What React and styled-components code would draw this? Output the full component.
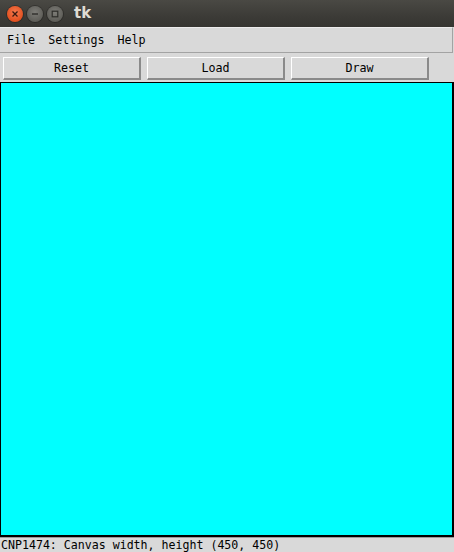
import React from "react";
import styled, { createGlobalStyle } from "styled-components";

const GlobalStyle = createGlobalStyle`
  html, body {
    margin: 0;
    padding: 0;
    background: #d9d9d9;
  }
`;

const Window = styled.div`
  width: 454px;
  height: 552px;
  display: flex;
  flex-direction: column;
  background: #d9d9d9;
  overflow: hidden;
  font-family: "DejaVu Sans Mono", "Liberation Mono", monospace;
  color: #000;
`;

const TitleBar = styled.div`
  height: 27px;
  flex: none;
  display: flex;
  align-items: center;
  padding-left: 7px;
  gap: 4px;
  background: linear-gradient(#4a4944, #3c3b37 60%, #363531);
`;

const WinButton = styled.div`
  width: 16px;
  height: 16px;
  border-radius: 50%;
  flex: none;
  display: flex;
  align-items: center;
  justify-content: center;
  background: ${(p) =>
    p.$close
      ? "radial-gradient(circle at 50% 40%, #f47a4f, #e3501f 70%, #c4441a)"
      : "radial-gradient(circle at 50% 40%, #7d7c77, #5d5c57 75%, #4c4b47)"};
  box-shadow: 0 0 0 1px rgba(0, 0, 0, 0.25);
`;

const Title = styled.div`
  margin-left: 7px;
  font-family: "DejaVu Sans", "Noto Sans", sans-serif;
  font-weight: bold;
  font-size: 15px;
  color: #dfdbd2;
  margin-top: -2px;
`;

const MenuBar = styled.div`
  flex: none;
  display: flex;
  align-items: center;
  padding-left: 1px;
  border-top: 1px solid #ececec;
  border-bottom: 1px solid #a3a3a3;
  border-right: 1px solid #a3a3a3;
  width: 453px;
  box-sizing: border-box;
  height: 26px;
`;

const MenuItem = styled.span`
  font-size: 11.7px;
  padding: 0 7px 0 6px;
  line-height: 25px;
`;

const ButtonRow = styled.div`
  height: 29px;
  flex: none;
  display: flex;
  gap: 6px;
  padding: 4px 0 0 3px;
  box-sizing: border-box;
`;

const Button = styled.div`
  width: 138px;
  height: 23px;
  box-sizing: border-box;
  border-style: solid;
  border-width: 1px 2px 2px 1px;
  border-color: #ffffff #8a8a8a #8a8a8a #ffffff;
  display: flex;
  align-items: center;
  justify-content: center;
  font-size: 11.7px;
`;

const Canvas = styled.div`
  height: 455px;
  width: 454px;
  flex: none;
  box-sizing: border-box;
  background: #00ffff;
  border-style: solid;
  border-color: #000;
  border-width: 1px 2px 2px 1px;
`;

const StatusBar = styled.div`
  flex: 1;
  border-top: 1px solid #9a9a9a;
  font-size: 11.6px;
  line-height: 14px;
  padding-left: 1px;
  white-space: nowrap;
`;

export default function App() {
  return (
    <>
      <GlobalStyle />
      <Window>
        <TitleBar>
          <WinButton $close>
            <svg width="8" height="8" viewBox="0 0 8 8">
              <path d="M1.5 1.5 L6.5 6.5 M6.5 1.5 L1.5 6.5" stroke="#3a1a10" strokeWidth="1.3" />
            </svg>
          </WinButton>
          <WinButton>
            <svg width="8" height="8" viewBox="0 0 8 8">
              <path d="M1 4 H7" stroke="#2e2d2a" strokeWidth="1.4" />
            </svg>
          </WinButton>
          <WinButton>
            <svg width="8" height="8" viewBox="0 0 8 8">
              <rect x="1.2" y="1.2" width="5.6" height="5.6" fill="none" stroke="#2e2d2a" strokeWidth="1.2" />
            </svg>
          </WinButton>
          <Title>tk</Title>
        </TitleBar>
        <MenuBar>
          <MenuItem>File</MenuItem>
          <MenuItem>Settings</MenuItem>
          <MenuItem>Help</MenuItem>
        </MenuBar>
        <ButtonRow>
          <Button>Reset</Button>
          <Button>Load</Button>
          <Button>Draw</Button>
        </ButtonRow>
        <Canvas />
        <StatusBar>CNP1474: Canvas width, height (450, 450)</StatusBar>
      </Window>
    </>
  );
}
